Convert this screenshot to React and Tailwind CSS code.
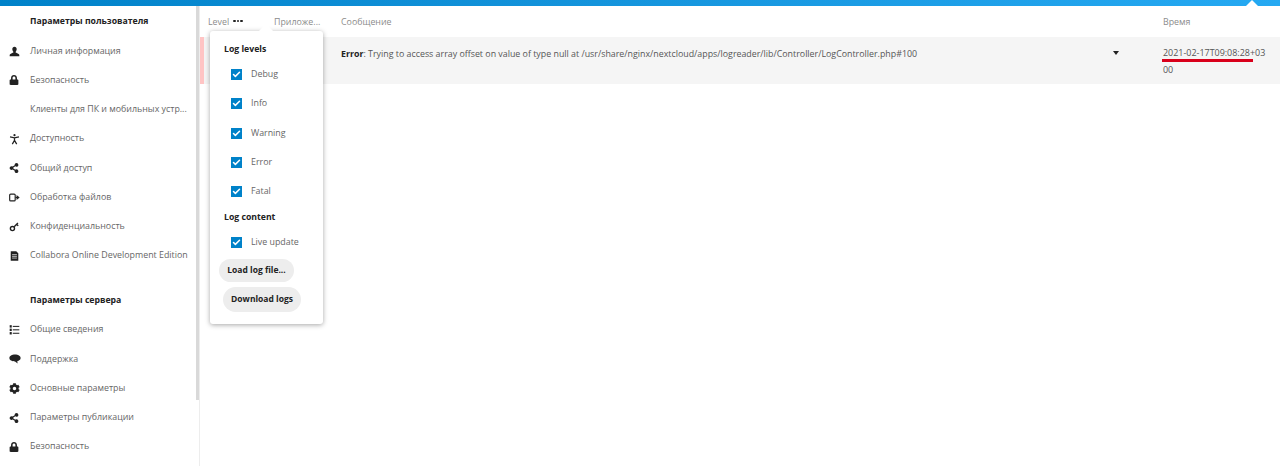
import { Check } from 'lucide-react'
import { FaCog, FaLock, FaShareAlt } from 'react-icons/fa'

const F = "font-['Open_Sans','Noto_Sans',sans-serif]"

const IconUser = () => (
  <svg viewBox="0 0 16 16" className="w-[11px] h-[11px]" fill="#222">
    <path d="M8 1C6 1 4.800 2.600 4.800 4.400c0 1.600.7 3 1.500 3.800.3.400.2 1-.2 1.300L2 11.500c-.6.300-1 .8-1 1.500V15h14v-2c0-.7-.4-1.200-1-1.500l-4.100-2c-.4-.3-.5-.9-.2-1.300.8-.8 1.500-2.200 1.500-3.800C11.200 2.600 10 1 8 1z" />
  </svg>
)
const IconLock = () => <FaLock size={10} color="#222" />
const IconShare = () => <FaShareAlt size={10} color="#222" />
const IconGear = () => <FaCog size={11} color="#222" />
const IconPerson = () => (
  <svg viewBox="0 0 16 16" className="w-[11px] h-[12px]" fill="none" stroke="#222" strokeWidth="1.800">
    <circle cx="8" cy="2.400" r="1.600" fill="#222" stroke="none" />
    <path d="M1.500 5 L8 6.200 L14.500 5 M8 6 V10 M8 10 L4.800 15.500 M8 10 L11.200 15.500" />
  </svg>
)
const IconFiles = () => (
  <svg viewBox="0 0 16 16" className="w-[11px] h-[11px]" fill="none" stroke="#222" strokeWidth="1.700">
    <rect x="1" y="3" width="8" height="10" rx="1.500" />
    <path d="M9.500 8h3" />
    <path d="M11 4.500 L15.500 8 L11 11.500z" fill="#222" stroke="none" />
  </svg>
)
const IconKey = () => (
  <svg viewBox="0 0 16 16" className="w-[11px] h-[11px]" fill="none" stroke="#222" strokeWidth="2">
    <circle cx="5" cy="11" r="3" />
    <path d="M7.500 8.500 L13 3 M11 5 L13.500 7" />
  </svg>
)
const IconDoc = () => (
  <svg viewBox="0 0 16 16" className="w-[11px] h-[12px]">
    <path d="M2.500 1h8l3 3v11h-11z" fill="#222" />
    <path d="M4.500 6h7M4.500 8.500h7M4.500 11h7" stroke="#fff" strokeWidth="1" />
  </svg>
)
const IconList = () => (
  <svg viewBox="0 0 16 16" className="w-[11px] h-[12px]" fill="#222">
    <rect x="1" y="1" width="3" height="3.500" />
    <rect x="1" y="6" width="3" height="3.500" />
    <rect x="1" y="11" width="3" height="3.500" />
    <rect x="5.500" y="2" width="9.500" height="1.500" />
    <rect x="5.500" y="7" width="9.500" height="1.500" />
    <rect x="5.500" y="12" width="9.500" height="1.500" />
  </svg>
)
const IconChat = () => (
  <svg viewBox="0 0 16 16" className="w-[12px] h-[12px]" fill="#222">
    <path d="M8 2c4 0 7.500 1.800 7.500 4.700 0 2.300-2 3.800-4.500 4.300l.5 3-3.500-2.800C3.800 11.200.5 9.500.5 6.700.5 3.800 4 2 8 2z" />
  </svg>
)

const userItems = [
  { label: 'Личная информация', icon: <IconUser /> },
  { label: 'Безопасность', icon: <IconLock /> },
  { label: 'Клиенты для ПК и мобильных устр...', icon: null },
  { label: 'Доступность', icon: <IconPerson /> },
  { label: 'Общий доступ', icon: <IconShare /> },
  { label: 'Обработка файлов', icon: <IconFiles /> },
  { label: 'Конфиденциальность', icon: <IconKey /> },
  { label: 'Collabora Online Development Edition', icon: <IconDoc /> },
]

const serverItems = [
  { label: 'Общие сведения', icon: <IconList /> },
  { label: 'Поддержка', icon: <IconChat /> },
  { label: 'Основные параметры', icon: <IconGear /> },
  { label: 'Параметры публикации', icon: <IconShare /> },
  { label: 'Безопасность', icon: <IconLock /> },
]

function NavRow({ item }) {
  return (
    <div className="h-[29.250px] flex items-center">
      <div className="w-[30px] pl-[9px] flex items-center shrink-0">{item.icon}</div>
      <span className="text-[8.850px] text-[#666] whitespace-nowrap">{item.label}</span>
    </div>
  )
}

function CheckRow({ label }) {
  return (
    <div className="h-[29.300px] flex items-center pl-[21px]">
      <div className="w-[11px] h-[11px] bg-[#0082c9] flex items-center justify-center">
        <Check size={9} stroke="#fff" strokeWidth={4} />
      </div>
      <span className="ml-[9px] text-[8.850px] text-[#666]">{label}</span>
    </div>
  )
}

export default function App() {
  return (
    <div className={`${F} w-[1280px] h-[466px] overflow-hidden bg-white flex flex-col`}>
      {/* top bar */}
      <div className="relative h-[6px] shrink-0 bg-gradient-to-r from-[#0082c9] to-[#25a9f2]">
        <div className="absolute left-[1246px] top-0 w-0 h-0 border-x-[6px] border-x-transparent border-b-[6px] border-b-white" />
      </div>

      <div className="flex flex-1 min-h-0">
        {/* sidebar */}
        <aside className="w-[200px] shrink-0 relative border-r border-[#ededed] overflow-hidden pt-[1.300px]">
          <div className="h-[29.250px] flex items-center pl-[30px] text-[8.700px] font-bold text-[#222]">Параметры пользователя</div>
          {userItems.map((item) => <NavRow key={item.label} item={item} />)}
          <div className="h-[15.500px]" />
          <div className="h-[29.250px] flex items-center pl-[30px] text-[8.700px] font-bold text-[#222]">Параметры сервера</div>
          {serverItems.map((item) => <NavRow key={item.label} item={item} />)}
          {/* scrollbar */}
          <div className="absolute right-0 top-0 w-[3.500px] h-[394px] bg-[#d9d9d9]" />
        </aside>

        {/* log table */}
        <main className="flex-1 relative text-[8.850px]">
          <div className="h-[31px] flex items-center text-[#8c8c8c] pt-[2px]">
            <div className="w-[74px] pl-[8px] flex items-center">
              Level
              <span className="ml-[4px] mb-[3px] flex gap-[1px]">
                <i className="w-[2.500px] h-[2.500px] rounded-full bg-[#222]" />
                <i className="w-[2.500px] h-[2.500px] rounded-full bg-[#222]" />
                <i className="w-[2.500px] h-[2.500px] rounded-full bg-[#222]" />
              </span>
            </div>
            <div className="w-[67px]">Приложе...</div>
            <div className="w-[822px]">Сообщение</div>
            <div>Время</div>
          </div>

          <div className="h-[47px] bg-[#f5f5f5] flex border-l-[4px] border-l-[#ffc4c4]">
            <div className="w-[137px] shrink-0" />
            <div className="w-[772px] shrink-0 pt-[10px] text-[#555] leading-[14px] whitespace-nowrap">
              <b className="text-[#222]">Error</b>: Trying to access array offset on value of type null at /usr/share/nginx/nextcloud/apps/logreader/lib/Controller/LogController.php#100
            </div>
            <div className="w-[50px] shrink-0 pt-[14px]">
              <div className="w-0 h-0 border-x-[3px] border-x-transparent border-t-[4px] border-t-[#222]" />
            </div>
            <div className="relative w-[106px] pt-[7px] text-[8.950px] text-[#555] leading-[17px] break-all">
              2021-02-17T09:08:28+0300
              <div className="absolute left-[-1px] top-[22px] w-[91px] h-[2.500px] bg-[#d9001b]" />
            </div>
          </div>

          {/* filter popover */}
          <div className="absolute left-[10px] top-[25px] w-[113px] h-[293px] bg-white rounded-[3px] shadow-[0_1px_5px_rgba(0,0,0,0.35)]">
            <div className="absolute left-[51px] top-[-5px] w-[10px] h-[10px] rotate-45 bg-white" />
            <div className="relative pt-[9px]">
              <div className="h-[20px] flex items-center pl-[14px] font-bold text-[8.700px] text-[#222]">Log levels</div>
              <CheckRow label="Debug" />
              <CheckRow label="Info" />
              <CheckRow label="Warning" />
              <CheckRow label="Error" />
              <CheckRow label="Fatal" />
              <div className="h-[21.300px] flex items-center pl-[14px] font-bold text-[8.700px] text-[#222]">Log content</div>
              <CheckRow label="Live update" />
              <div className="pl-[9px] mt-[2px]">
                <button className="h-[23px] w-[75px] rounded-full bg-[#ededed] font-bold text-[8.500px] text-[#222]">Load log file...</button>
              </div>
              <div className="pl-[13px] mt-[5px]">
                <button className="h-[25px] w-[78px] rounded-full bg-[#ededed] font-bold text-[8.500px] text-[#222]">Download logs</button>
              </div>
            </div>
          </div>
        </main>
      </div>
    </div>
  )
}
